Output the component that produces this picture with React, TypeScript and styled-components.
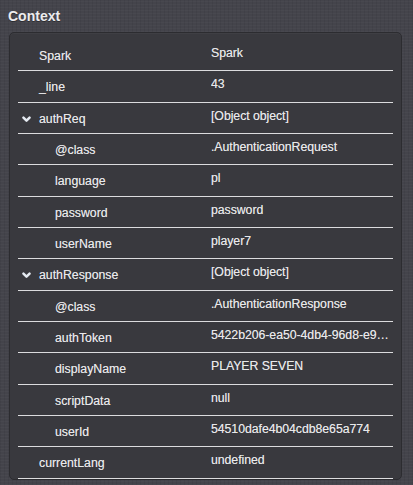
import React from 'react';
import styled, { createGlobalStyle } from 'styled-components';

type Entry = { key: string; value: string; depth: number; open?: boolean };

const entries: Entry[] = [
  { key: 'Spark', value: 'Spark', depth: 0 },
  { key: '_line', value: '43', depth: 0 },
  { key: 'authReq', value: '[Object object]', depth: 0, open: true },
  { key: '@class', value: '.AuthenticationRequest', depth: 1 },
  { key: 'language', value: 'pl', depth: 1 },
  { key: 'password', value: 'password', depth: 1 },
  { key: 'userName', value: 'player7', depth: 1 },
  { key: 'authResponse', value: '[Object object]', depth: 0, open: true },
  { key: '@class', value: '.AuthenticationResponse', depth: 1 },
  { key: 'authToken', value: '5422b206-ea50-4db4-96d8-e9f1c2a7b3d0', depth: 1 },
  { key: 'displayName', value: 'PLAYER SEVEN', depth: 1 },
  { key: 'scriptData', value: 'null', depth: 1 },
  { key: 'userId', value: '54510dafe4b04cdb8e65a774', depth: 1 },
  { key: 'currentLang', value: 'undefined', depth: 0 },
];

const App: React.FC = () => {
  return (
    <>
      <GlobalStyle />
      <Page>
        <Title>Context</Title>
        <Card>
          {entries.map((e, i) => (
            <Row key={i}>
              <Key depth={e.depth}>
                {e.open && (
                  <Chevron viewBox="0 0 10 8">
                    <path d="M1.5 1.8 L5 5.4 L8.5 1.8" fill="none" stroke="#e6ebf2" strokeWidth="2.8" strokeLinecap="round" strokeLinejoin="round" />
                  </Chevron>
                )}
                {e.key}
              </Key>
              <Value>{e.value}</Value>
            </Row>
          ))}
        </Card>
      </Page>
    </>
  );
};

export default App;

const GlobalStyle = createGlobalStyle`
  html, body {
    margin: 0;
    padding: 0;
    overflow: hidden;
  }
  body {
    background-color: #44444b;
    background-image:
      repeating-linear-gradient(0deg, rgba(255,255,255,0.025) 0px, rgba(255,255,255,0.025) 1px, transparent 1px, transparent 3px),
      repeating-linear-gradient(90deg, rgba(0,0,0,0.06) 0px, rgba(0,0,0,0.06) 1px, transparent 1px, transparent 4px);
  }
`;

const Page = styled.div`
  width: 413px;
  height: 485px;
  overflow: hidden;
  font-family: "Liberation Sans", Arial, Helvetica, sans-serif;
  color: #e8e8ea;
`;

const Title = styled.div`
  padding: 8px 0 0 8px;
  height: 17px;
  font-size: 14px;
  font-weight: bold;
  line-height: 17px;
  color: #ececee;
  text-shadow: 0 1px 0 rgba(0, 0, 0, 0.35);
`;

const Card = styled.div`
  margin: 7px 11px 0 9px;
  padding: 7px 8px 0 8px;
  background: #39393e;
  border: 1px solid #2c2c30;
  border-radius: 5px;
  box-shadow: inset 0 1px 0 rgba(255, 255, 255, 0.03);
`;

const Row = styled.div`
  display: flex;
  align-items: flex-start;
  height: 30.33px;
  border-bottom: 1px solid #dcdcde;
  font-size: 12.3px;
  line-height: 15px;
  text-shadow: 0 0 0.4px rgba(232, 232, 234, 0.6);
`;

const Key = styled.div<{ depth: number }>`
  display: flex;
  align-items: center;
  box-sizing: border-box;
  width: 193px;
  flex-shrink: 0;
  padding-top: 9px;
  padding-left: ${(p) => (p.depth === 0 ? 21 : 37)}px;
  position: relative;
  white-space: nowrap;
`;

const Chevron = styled.svg`
  position: absolute;
  left: 3.5px;
  top: 13px;
  width: 9px;
  height: 7px;
`;

const Value = styled.div`
  flex: 1;
  min-width: 0;
  padding-top: 6px;
  padding-right: 4px;
  letter-spacing: -0.05px;
  white-space: nowrap;
  overflow: hidden;
  text-overflow: ellipsis;
`;
